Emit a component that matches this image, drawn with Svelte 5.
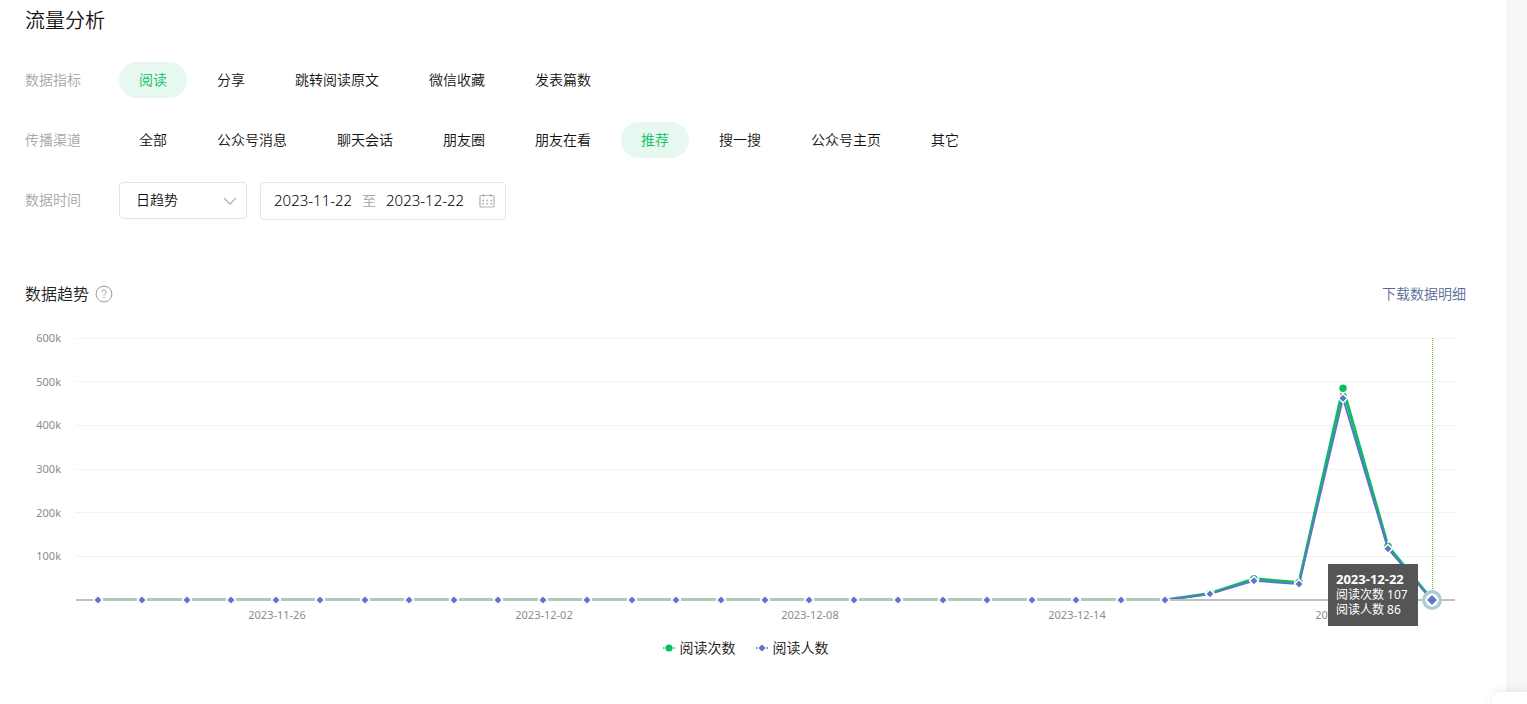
<script lang="ts">
    type Point = {
        date: string;
        reads: number;
        readers: number;
    }

    const metrics = ["阅读", "分享", "跳转阅读原文", "微信收藏", "发表篇数"];
    const channels = ["全部", "公众号消息", "聊天会话", "朋友圈", "朋友在看", "推荐", "搜一搜", "公众号主页", "其它"];

    let metric = $state("阅读");
    let channel = $state("推荐");
    let period = $state("day");
    let start = $state("2023-11-22");
    let end = $state("2023-12-22");

    // the last days of the range, everything before is close to zero
    const tail = [
        [15000, 14000],
        [48500, 44000],
        [40000, 36500],
        [485000, 462000],
        [123000, 117500],
        [107, 86],
    ];

    const points: Point[] = Array.from({ length: 31 }, (_, i) => {
        const day = new Date(Date.UTC(2023, 10, 22 + i));
        const [reads, readers] = tail[i - 25] ?? [120, 90];
        return { date: day.toISOString().slice(0, 10), reads, readers };
    });

    const ticks = [600, 500, 400, 300, 200, 100];
    const left = 51;
    const right = 11;
    const top = 14;
    const base = 276;

    let width = $state(1441);
    let active = $state(30);

    const step = $derived((width - left - right) / points.length);
    const x = (i: number) => Math.floor(left + step * (i + 0.5));
    const y = (value: number) => base - (value / 600000) * (base - top);
    const line = (key: "reads" | "readers") => points.map((p, i) => `${x(i)},${y(p[key])}`).join(" ");
</script>

<div class="page">
    <main>
        <h1>流量分析</h1>

        <div class="filter">
            <span class="label">数据指标</span>
            <div class="options">
                {#each metrics as name (name)}
                <button type="button" class:selected={metric === name} onclick={() => (metric = name)}>{name}</button>
                {/each}
            </div>
        </div>

        <div class="filter">
            <span class="label">传播渠道</span>
            <div class="options">
                {#each channels as name (name)}
                <button type="button" class:selected={channel === name} onclick={() => (channel = name)}>{name}</button>
                {/each}
            </div>
        </div>

        <div class="filter">
            <label class="label" for="period">数据时间</label>
            <div class="time">
                <div class="select">
                    <select id="period" bind:value={period}>
                        <option value="day">日趋势</option>
                        <option value="hour">小时趋势</option>
                    </select>
                    <svg class="chevron" width="14" height="8" viewBox="0 0 14 8" aria-hidden="true">
                        <path d="M1 1l6 6 6-6" fill="none" stroke="#b2b2b2" stroke-width="1.3" />
                    </svg>
                </div>
                <div class="range">
                    <input type="text" aria-label="开始日期" bind:value={start} />
                    <span>至</span>
                    <input type="text" aria-label="结束日期" bind:value={end} />
                    <svg width="16" height="14" viewBox="0 0 16 14" aria-hidden="true">
                        <rect x="1" y="1.5" width="14" height="11.5" rx="1" fill="none" stroke="#b4b4b4" stroke-width="1.2" />
                        <path d="M4.5 0v3M11.5 0v3" stroke="#b4b4b4" stroke-width="1.2" />
                        <path d="M3 6.5h10.5M3 9.8h10.5" stroke="#b4b4b4" stroke-width="1.6" stroke-dasharray="2 2.2" />
                    </svg>
                </div>
            </div>
        </div>

        <div class="heading">
            <h2>数据趋势</h2>
            <svg width="18" height="18" viewBox="0 0 18 18" aria-hidden="true">
                <circle cx="9" cy="9" r="7.9" fill="none" stroke="#9a9a9a" />
                <path d="M6.8 7.2c0-1.4 1-2.2 2.2-2.2s2.2.8 2.2 2c0 1.6-2.2 1.7-2.2 3.6" fill="none" stroke="#9a9a9a" />
                <rect x="8.4" y="11.8" width="1.2" height="1.2" fill="#9a9a9a" />
            </svg>
            <a href="#download">下载数据明细</a>
        </div>

        <div class="chart" bind:clientWidth={width}>
            <svg {width} height="300" role="img" aria-label="数据趋势">
                <clipPath id="plot">
                    <rect x={left} y={top} width={width - left - right} height={base - top + 1} />
                </clipPath>

                {#each ticks as tick (tick)}
                <line class="grid" x1={left} x2={width - right} y1={Math.floor(y(tick * 1000)) + 0.5} y2={Math.floor(y(tick * 1000)) + 0.5} />
                <text x={left - 15} y={y(tick * 1000) + 4} text-anchor="end">{tick}k</text>
                {/each}
                {#each points as point, i (point.date)}
                {#if i % 6 === 4}
                <text x={x(i) + 1} y={base + 19} text-anchor="middle">{point.date}</text>
                {/if}
                {/each}

                <line class="cursor" x1={x(active) + 0.5} x2={x(active) + 0.5} y1={top} y2={base} />
                <polyline points={line("reads")} stroke="#07c160" stroke-width="3" clip-path="url(#plot)" />
                {#each points as point, i (point.date)}
                <circle class="marker" cx={x(i)} cy={y(point.reads)} r="4.5" fill="#07c160" />
                {/each}
                <polyline points={line("readers")} stroke="#5f73cc" stroke-width="2" clip-path="url(#plot)" />
                <line class="axis" x1={left} x2={width - right} y1={base} y2={base} />

                <circle cx={x(active)} cy={base} r="10" fill="#a8cdd3" />
                <circle cx={x(active)} cy={base} r="6.5" fill="#fff" />
                {#each points as point, i (point.date)}
                {@const size = i === active ? 6 : 4.5}
                <path
                    class="marker"
                    d="M{x(i)} {y(point.readers) - size}l{size} {size}l{-size} {size}l{-size} {-size}z"
                    fill="#5f73cc"
                    role="presentation"
                    onmouseenter={() => (active = i)}
                />
                {/each}
            </svg>

            <div class="tooltip" style:right="{width - x(active) + 14}px">
                <strong>{points[active].date}</strong>
                <span>阅读次数 {points[active].reads}</span>
                <span>阅读人数 {points[active].readers}</span>
            </div>
        </div>

        <div class="legend">
            <span>
                <svg width="12" height="10" viewBox="0 0 12 10" aria-hidden="true">
                    <path d="M0 5h12" stroke="#07c160" stroke-width="1.5" stroke-dasharray="1.5 9" />
                    <circle cx="6" cy="5" r="3.6" fill="#07c160" />
                </svg>
                阅读次数
            </span>
            <span>
                <svg width="12" height="10" viewBox="0 0 12 10" aria-hidden="true">
                    <path d="M0 5h12" stroke="#5f73cc" stroke-width="1.5" stroke-dasharray="1.5 9" />
                    <path d="M6 1.4l3.6 3.6L6 8.6 2.4 5z" fill="#5f73cc" />
                </svg>
                阅读人数
            </span>
        </div>
    </main>
    <div class="corner"></div>
</div>

<style>
    :global(body) {
        margin: 0;
        background: #f5f6f8;
    }

    .page {
        position: relative;
        box-sizing: border-box;
        min-height: 100vh;
        padding-right: 21px;
        display: flex;
        overflow: hidden;
        font-family: "Noto Sans", "Noto Sans CJK SC", sans-serif;
        font-size: 14px;
        font-weight: 350;
        line-height: 20px;
        color: #111;
    }

    main {
        flex: 1;
        min-width: 0;
        padding: 7px 40px 24px 25px;
        background: #fff;
    }

    h1,
    h2 {
        margin: 0;
        font-weight: 350;
    }

    h1 {
        margin-bottom: 27px;
        font-size: 20px;
        line-height: 28px;
    }

    h2 {
        font-size: 16px;
        line-height: 20px;
        color: #222;
    }

    .filter {
        display: flex;
        align-items: flex-start;
        margin-bottom: 24px;
    }

    .label {
        flex: none;
        width: 94px;
        line-height: 36px;
        color: #a6a6a6;
    }

    .options {
        display: flex;
        flex-wrap: wrap;
        gap: 10px;
    }

    button {
        height: 36px;
        padding: 0 20px;
        border: 0;
        border-radius: 18px;
        background: none;
        font: inherit;
        color: #111;
        cursor: pointer;

        &.selected {
            background: #e6f8ef;
            color: #07c160;
        }
    }

    .time {
        display: flex;
        align-items: flex-start;
        gap: 13px;
    }

    .select {
        position: relative;

        & select {
            width: 128px;
            height: 37px;
            padding: 0 36px 2px 16px;
            border: 1px solid #e4e4e6;
            border-radius: 4px;
            appearance: none;
            background: #fff;
            font: inherit;
            color: #111;
        }

        & .chevron {
            position: absolute;
            top: 15px;
            right: 10px;
            pointer-events: none;
        }
    }

    .range {
        display: flex;
        align-items: center;
        box-sizing: border-box;
        height: 38px;
        padding: 0 10px 0 13px;
        border: 1px solid #e4e7eb;
        border-radius: 4px;
        color: #a6a6a6;

        & input {
            width: 80px;
            padding: 0 0 2px;
            border: 0;
            background: none;
            font: inherit;
            font-size: 15px;
            color: #000;
        }

        & span {
            margin: 0 10px 0 8px;
        }

        & svg {
            margin-left: 13px;
        }
    }

    .heading {
        display: flex;
        align-items: center;
        margin: 64px 0 20px;

        & svg {
            margin-left: 6px;
        }

        & a {
            margin-left: auto;
            color: #576b95;
            text-decoration: none;
        }
    }

    .chart {
        position: relative;

        & svg {
            display: block;
        }

        & text {
            font-size: 11px;
            font-weight: 400;
            fill: #8c8c8c;
        }
    }

    .grid {
        stroke: #f2f2f2;
    }

    .axis {
        stroke: #c0c0c0;
        stroke-width: 2;
    }

    .cursor {
        stroke: #66cc22;
        stroke-dasharray: 1 1;
    }

    polyline {
        fill: none;
        stroke-linejoin: round;
    }

    .marker {
        stroke: #fff;
        stroke-width: 1.5;
    }

    .tooltip {
        position: absolute;
        top: 240px;
        display: flex;
        flex-direction: column;
        box-sizing: border-box;
        min-width: 90px;
        height: 62px;
        padding: 8px;
        background: #555;
        font-size: 12px;
        font-weight: 400;
        line-height: 15px;
        color: #fff;
        white-space: nowrap;

        & strong {
            font-size: 13px;
        }
    }

    .legend {
        display: flex;
        justify-content: center;
        gap: 20px;
        margin-top: 14px;

        & span {
            display: flex;
            align-items: center;
            gap: 5px;
        }
    }

    /* edge of the floating help panel */
    .corner {
        position: absolute;
        right: 0;
        bottom: 0;
        width: 35px;
        height: 12px;
        border-radius: 8px 0 0;
        background: #fff;
        box-shadow: 0 0 12px rgb(0 0 0 / 10%);
    }
</style>
